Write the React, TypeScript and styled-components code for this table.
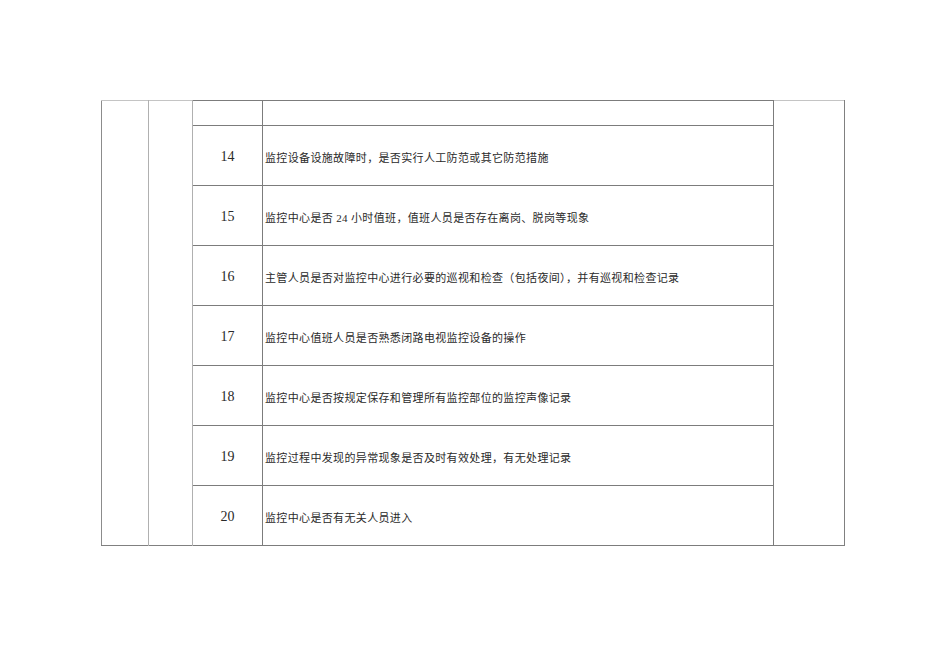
import React from "react";
import styled, { createGlobalStyle } from "styled-components";

const GlobalStyle = createGlobalStyle`
  html, body {
    margin: 0;
    padding: 0;
    background: #ffffff;
  }
  body {
    font-family: "Liberation Serif", "Noto Sans CJK SC", serif;
  }
`;

interface Item {
  no: number;
  text: string;
}

const items: Item[] = [
  { no: 14, text: "监控设备设施故障时，是否实行人工防范或其它防范措施" },
  { no: 15, text: "监控中心是否 24 小时值班，值班人员是否存在离岗、脱岗等现象" },
  { no: 16, text: "主管人员是否对监控中心进行必要的巡视和检查（包括夜间），并有巡视和检查记录" },
  { no: 17, text: "监控中心值班人员是否熟悉闭路电视监控设备的操作" },
  { no: 18, text: "监控中心是否按规定保存和管理所有监控部位的监控声像记录" },
  { no: 19, text: "监控过程中发现的异常现象是否及时有效处理，有无处理记录" },
  { no: 20, text: "监控中心是否有无关人员进入" },
];

const App: React.FC = () => {
  return (
    <>
      <GlobalStyle />
      <Page>
        <Sheet>
          <colgroup>
            <col style={{ width: 47 }} />
            <col style={{ width: 44 }} />
            <col style={{ width: 70 }} />
            <col style={{ width: 511 }} />
            <col style={{ width: 71 }} />
          </colgroup>
          <tbody>
            <TopRow>
              <SideCell rowSpan={items.length + 1} $light />
              <SideCell rowSpan={items.length + 1} $light />
              <NumCell />
              <TextCell />
              <SideCell rowSpan={items.length + 1} />
            </TopRow>
            {items.map((item) => (
              <ItemRow key={item.no}>
                <NumCell>{item.no}</NumCell>
                <TextCell>{item.text}</TextCell>
              </ItemRow>
            ))}
          </tbody>
        </Sheet>
      </Page>
    </>
  );
};

const Page = styled.div`
  width: 950px;
  height: 672px;
  padding: 100px 0 0 101px;
  box-sizing: border-box;
`;

const Sheet = styled.table`
  border-collapse: collapse;
  table-layout: fixed;
  width: 744px;
  border-top: 1px solid #c4c4c4;
  border-bottom: 1px solid #808080;
  border-left: 1px solid #8c8c8c;
  border-right: 1px solid #9a9a9a;
`;

const TopRow = styled.tr`
  height: 25px;
`;

const ItemRow = styled.tr`
  height: 60px;
`;

const SideCell = styled.td<{ $light?: boolean }>`
  border-right: 1px solid ${(p) => (p.$light ? "#b0b0b0" : "#808080")};
  padding: 0;
`;

const NumCell = styled.td`
  border: 1px solid #7c7c7c;
  padding: 3px 0 0 0;
  text-align: center;
  vertical-align: middle;
  font-family: "Liberation Serif", serif;
  font-size: 14px;
  color: #2a2a2a;
`;

const TextCell = styled.td`
  border: 1px solid #7c7c7c;
  padding: 2px 0 0 2px;
  vertical-align: middle;
  font-family: "Liberation Serif", "Noto Sans CJK SC", serif;
  font-size: 11px;
  letter-spacing: 0.35px;
  color: #2a2a2a;
  white-space: nowrap;
`;

export default App;
